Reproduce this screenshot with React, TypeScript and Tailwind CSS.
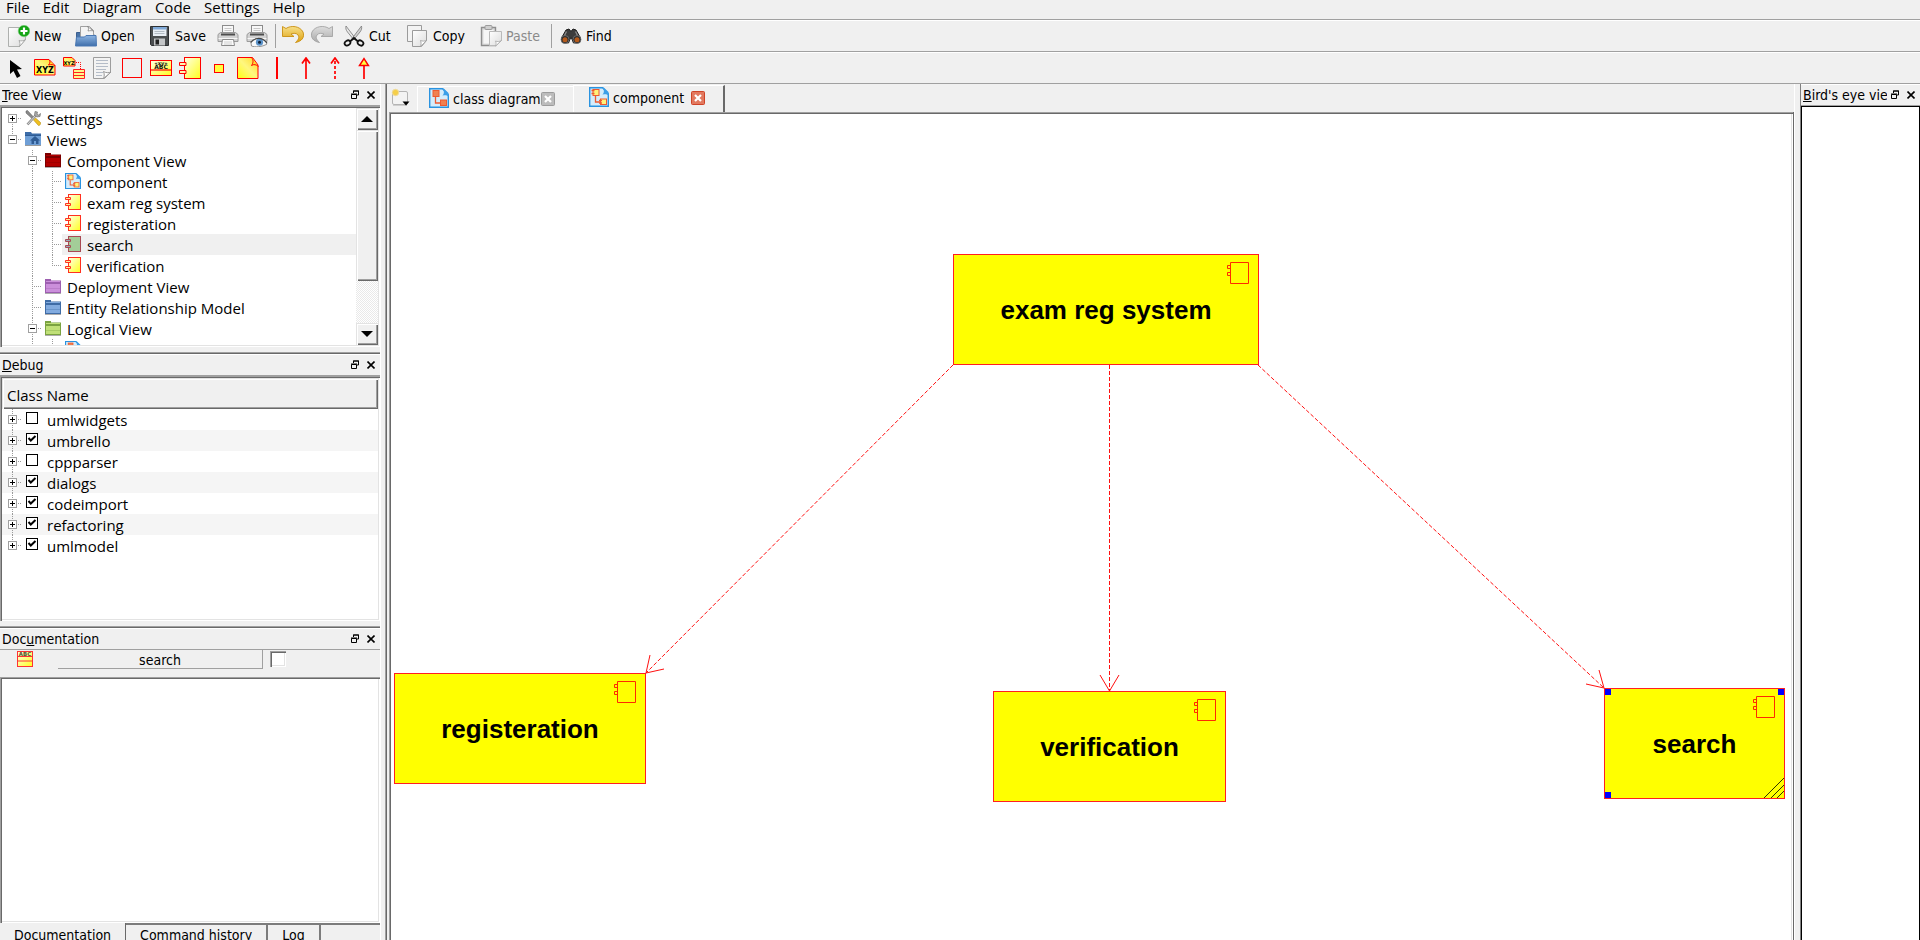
import { useState, type ReactNode } from "react";

const SUNKEN =
  "p-[2px] shadow-[inset_1px_1px_0_#a0a0a0,inset_2px_2px_0_#696969,inset_-1px_-1px_0_#ffffff,inset_-2px_-2px_0_#e3e3e3]";
const RAISED =
  "shadow-[inset_1px_1px_0_#e3e3e3,inset_2px_2px_0_#ffffff,inset_-1px_-1px_0_#696969,inset_-2px_-2px_0_#a0a0a0]";
const UI_FONT = "font-['DejaVu_Sans_Condensed','Noto_Sans',sans-serif] text-sm";

/* ---------- Icons ---------- */

function Svg({ size = 22, children }: { size?: number; children: ReactNode }) {
  return (
    <svg
      viewBox={`0 0 ${size} ${size}`}
      width={size}
      height={size}
      className="block shrink-0"
      aria-hidden="true"
    >
      {children}
    </svg>
  );
}

function Gradients() {
  return (
    <svg width="0" height="0" className="absolute" aria-hidden="true">
      <defs>
        <linearGradient id="yellow" x1="0" y1="0" x2="1" y2="1">
          <stop offset="0" stopColor="#ffffe6" />
          <stop offset="1" stopColor="#ffff1e" />
        </linearGradient>
        <linearGradient id="gold" x1="0" y1="1" x2="1" y2="0">
          <stop offset="0" stopColor="#ffff10" />
          <stop offset="0.5" stopColor="#fff780" />
          <stop offset="1" stopColor="#ffd820" />
        </linearGradient>
        <linearGradient id="paper" x1="0" y1="0" x2="1" y2="1">
          <stop offset="0" stopColor="#ffffff" />
          <stop offset="1" stopColor="#dcdcdc" />
        </linearGradient>
        <linearGradient id="blue" x1="0" y1="0" x2="0" y2="1">
          <stop offset="0" stopColor="#8db4e2" />
          <stop offset="1" stopColor="#3f6fab" />
        </linearGradient>
        <linearGradient id="undo" x1="0" y1="0" x2="0" y2="1">
          <stop offset="0" stopColor="#f7e08a" />
          <stop offset="1" stopColor="#dd9f0c" />
        </linearGradient>
        <linearGradient id="redo" x1="0" y1="0" x2="0" y2="1">
          <stop offset="0" stopColor="#dedede" />
          <stop offset="1" stopColor="#a9a9a9" />
        </linearGradient>
      </defs>
    </svg>
  );
}

const NewIcon = () => (
  <Svg>
    <path d="M.5 2.5h17v12l-6 7H.5z" fill="url(#paper)" stroke="#aeb0ae" />
    <path d="M11.5 21.5c.8-2 .5-4-.5-6 2 .8 4.500 .5 6.500-1z" fill="#fff" stroke="#9a9c9a" strokeWidth=".8" />
    <circle cx="16" cy="6" r="5.800" fill="#12a312" stroke="#7fd07f" strokeWidth=".6" />
    <path d="M16 2.500v7M12.500 6h7" stroke="#fff" strokeWidth="2.200" />
  </Svg>
);

const OpenIcon = () => (
  <Svg>
    <path d="M1.500 20V7.500h6l2 2H19V20z" fill="#4a74a8" stroke="#3b5f8f" />
    <path d="M5.500 12V1.500h9l4 4V13h-13z" fill="#f4f4f4" stroke="#a0a0a0" />
    <path d="M12.500 1.500c1.500 1.500 1 3 .5 4.500 2-.5 4-.5 5.500 0z" fill="#fff" stroke="#777" strokeWidth=".7" />
    <path d="M.5 21l1-9h8l1.500-1.500h10l.5 10.500z" fill="url(#blue)" stroke="#4a78b3" />
  </Svg>
);

const SaveIcon = () => (
  <Svg>
    <path d="M1.500 1.500h18v19h-17l-1-1z" fill="#4b4e50" stroke="#2e3032" />
    <rect x="4" y="2" width="13.500" height="9" fill="#e9eef4" />
    <path d="M4 2h13.500v2.500H4z" fill="#7fa9d8" />
    <path d="M5.500 6.500h10M5.500 8.500h10" stroke="#b4bcc4" />
    <rect x="5" y="13.500" width="11" height="7" fill="#c4c6c8" />
    <rect x="6.500" y="14.500" width="3.500" height="5" fill="#222" />
  </Svg>
);

const Printer = () => (
  <>
    <rect x="5.500" y=".5" width="11" height="8" fill="#f8f8f8" stroke="#8b8b8b" />
    <path d="M7.500 3.500h7M7.500 5.500h7" stroke="#c8c8c8" />
    <path d="M1 9.500l2.500-2h15l2.500 2v7H1z" fill="#d2d2d2" stroke="#9a9a9a" />
    <path d="M4 8.500h14v2H4z" fill="#4d4d4d" />
    <path d="M1.500 13.500h19" stroke="#f6f6f6" />
  </>
);

const PrintIcon = () => (
  <Svg>
    <Printer />
    <path d="M5.500 14.500h11l1 6h-13z" fill="#fbfbfb" stroke="#8b8b8b" />
    <path d="M7 17h8M7 19h8" stroke="#d0d0d0" />
  </Svg>
);

const PreviewIcon = () => (
  <Svg>
    <Printer />
    <path d="M5.500 21c3 1.500 11 1 15.500-2-2-4-5-5.500-8-5.500-3.500 0-6 2-8 4.500z" fill="#f6f8fa" stroke="#777" strokeWidth=".8" />
    <circle cx="13.500" cy="17.200" r="3.600" fill="#5b92c8" />
    <circle cx="13.500" cy="17.200" r="1.500" fill="#0c2038" />
    <path d="M4.500 17.500c3-4.500 11-6.500 16.500.5" fill="none" stroke="#444" strokeWidth="1.100" />
  </Svg>
);

const undoShape =
  "M.5 1.500l3.500 2c5-3.500 14-2.500 17 3.500 2 5.500-1.500 9.500-7.500 10.500 2.500-2.500 4.500-5 2.500-7.500-1.500-2-4.500-2-7-1l3 2.500H.5z";

const UndoIcon = () => (
  <Svg>
    <path d={undoShape} fill="url(#undo)" stroke="#c98f10" strokeWidth=".9" />
  </Svg>
);

const RedoIcon = () => (
  <Svg>
    <g transform="matrix(-1 0 0 1 22 0)">
      <path d={undoShape} fill="url(#redo)" stroke="#a4a4a4" strokeWidth=".9" />
    </g>
  </Svg>
);

const CutIcon = () => (
  <Svg>
    <path d="M3 1c-.5 2.500 0 4 1.500 6l6.500 8 1.500-1.500z" fill="#e8e8e8" stroke="#777" strokeWidth=".8" />
    <path d="M18.500 1c.5 2.500 0 4-1.500 6l-6.500 8L9 13.500z" fill="#d2d2d2" stroke="#777" strokeWidth=".8" />
    <ellipse cx="4.500" cy="18" rx="3" ry="2.400" fill="none" stroke="#111" strokeWidth="1.800" transform="rotate(-30 4.500 18)" />
    <ellipse cx="17.500" cy="18" rx="3" ry="2.400" fill="none" stroke="#111" strokeWidth="1.800" transform="rotate(30 17.500 18)" />
    <path d="M7 16.500l4-3.500 4 3.500" fill="none" stroke="#111" strokeWidth="1.800" />
  </Svg>
);

const CopyIcon = () => (
  <Svg>
    <path d="M.5.5h14v16H.5z" fill="#f3f3f3" stroke="#9b9b9b" />
    <path d="M5.500 5.500h14v10l-5 6h-9z" fill="url(#paper)" stroke="#9b9b9b" />
    <path d="M13.500 21.500c.8-2 .8-4 0-6 2 .8 4 .8 6 0z" fill="#fff" stroke="#9b9b9b" strokeWidth=".8" />
  </Svg>
);

const PasteIcon = () => (
  <Svg>
    <path d="M1.500 2.500h14v18h-14z" fill="#dcdcdc" stroke="#8e8e8e" strokeWidth="1.400" />
    <path d="M3.500 5h10v13.500h-10z" fill="#f6f6f6" />
    <rect x="5" y=".5" width="7" height="4" rx="1" fill="#cfcfcf" stroke="#9b9b9b" />
    <path d="M9.500 6.500h12v9l-5 5h-7z" fill="url(#paper)" stroke="#b9b9b9" />
    <path d="M15.500 21c.8-2 .8-3.500 0-5 2 .8 4 .8 6-.5z" fill="#fff" stroke="#a8a8a8" strokeWidth=".8" />
  </Svg>
);

const FindIcon = () => (
  <Svg>
    <path d="M6 5l3-1 1.500 2h1L13 4l3 1 4.500 8-1 4.500-6 .5-2-5h-1l-2 5-6-.5-1-4.500z" fill="#3c3c3c" stroke="#1c1c1c" />
    <path d="M6.500 6.500L4 11.500M15.500 6.500l2.500 5" stroke="#8c8c8c" strokeWidth="1.300" />
    <circle cx="5" cy="14.500" r="4" fill="#2b2b2b" stroke="#777" strokeWidth=".8" />
    <circle cx="17" cy="14.500" r="4" fill="#2b2b2b" stroke="#777" strokeWidth=".8" />
    <circle cx="5" cy="14.800" r="2.500" fill="#b45a1c" />
    <circle cx="17" cy="14.800" r="2.500" fill="#b45a1c" />
  </Svg>
);

const PointerIcon = () => (
  <Svg>
    <path d="M5 3v14l3.500-3 3.500 7 3.500-2-3.500-6.500 5-.5z" fill="#000" />
  </Svg>
);

const ObjectIcon = () => (
  <Svg>
    <path d="M.5 2.500h14.500l6 6v9.500H.5z" fill="url(#gold)" stroke="#f00" />
    <path d="M14.500 2.500c2 1.500 2 3 0 5.500 2.500-.8 5-.5 6.500 1" fill="#ffe030" stroke="#f00" />
    <text x="11" y="16" textAnchor="middle" fontSize="8" fontWeight="bold" fontFamily="DejaVu Sans" fill="#000">XYZ</text>
  </Svg>
);

const InstanceIcon = () => (
  <Svg>
    <path d="M.5.500h8.500l3 3v5.500H.5z" fill="url(#gold)" stroke="#f00" />
    <text x="6" y="7.500" textAnchor="middle" fontSize="5" fontWeight="bold" fontFamily="DejaVu Sans" fill="#000">XYZ</text>
    <path d="M13 5.500h4.500V12" fill="none" stroke="#f00" strokeDasharray="1 1" />
    <path d="M10.500 12.500h11v9h-11zM10.500 15.500h11M10.500 18.500h11" fill="#fff68a" stroke="#f22" />
  </Svg>
);

const NoteIcon = () => (
  <Svg>
    <path d="M1.500.5h17v15l-6 6h-11z" fill="#f3f3f3" stroke="#9d9d9d" />
    <path d="M4 3.500h12M4 6.500h12M4 9.500h12M4 12.500h10M4 15.500h7M4 18.500h6" stroke="#b4bcc8" />
    <path d="M11.500 21.500c1-2.500 1-4.500 0-7 2.500 1.500 5 1.500 7.500.5z" fill="#fff" stroke="#999" />
  </Svg>
);

const BoxIcon = () => (
  <Svg>
    <rect x="1.500" y="1.500" width="19" height="19" fill="none" stroke="#f00" />
  </Svg>
);

const InterfaceIcon = () => (
  <Svg>
    <rect x=".5" y="3.500" width="21" height="15" fill="url(#yellow)" stroke="#f00" />
    <path d="M.5 13h21" stroke="#f00" strokeWidth="1.200" />
    <text x="11" y="7.500" textAnchor="middle" fontSize="5" fontWeight="bold" fontFamily="DejaVu Sans" fill="#111">«xy»</text>
    <text x="11" y="12" textAnchor="middle" fontSize="6" fontWeight="bold" fontFamily="DejaVu Sans" fill="#111">ABC</text>
  </Svg>
);

const ComponentToolIcon = () => (
  <Svg>
    <rect x="5.500" y=".5" width="16" height="21" fill="url(#yellow)" stroke="#f00" />
    <path d="M.5 5.500h6.500v3H.5zM.5 13.500h6.500v3H.5z" fill="#fff5b0" stroke="#f00" />
  </Svg>
);

const PortIcon = () => (
  <Svg>
    <rect x="6.500" y="7.500" width="9" height="8" fill="#ffff40" stroke="#f00" />
  </Svg>
);

const ArtifactIcon = () => (
  <Svg>
    <path d="M.5.500h15l5.500 7.500v13.500H.5z" fill="url(#gold)" stroke="#f00" />
    <path d="M14.500.5c2 2.500 2 5 0 8 2-1.500 5-1 7 1" fill="#ffdf30" stroke="#f00" />
  </Svg>
);

const LineIcon = () => (
  <Svg>
    <path d="M11 0v22" stroke="#f00" strokeWidth="2" />
  </Svg>
);

const ArrowIcon = () => (
  <Svg>
    <path d="M11 1v21M7 6.500L11 1l4 5.500" fill="none" stroke="#f00" strokeWidth="1.700" />
  </Svg>
);

const DashedArrowIcon = () => (
  <Svg>
    <path d="M11 22V2" fill="none" stroke="#f00" strokeWidth="1.700" strokeDasharray="3 2" />
    <path d="M7 6.500L11 1l4 5.500" fill="none" stroke="#f00" strokeWidth="1.700" />
  </Svg>
);

const TriangleArrowIcon = () => (
  <Svg>
    <path d="M11 7v15" stroke="#f00" strokeWidth="1.700" />
    <path d="M6.500 8.500L11 1.500l4.500 7z" fill="#ffff40" stroke="#f00" strokeWidth="1.400" />
  </Svg>
);

const ToolsIcon = () => (
  <Svg size={16}>
    <path d="M1 1l1.500-.5L9 7.500 7.500 9 1 3z" fill="#8a8a8a" stroke="#555" strokeWidth=".5" />
    <path d="M8.500 10l2-2 5 4.500c.5 1.500-.5 3-2 3z" fill="#f0c020" stroke="#b08a10" strokeWidth=".6" />
    <path d="M2.500 14.500l8-9" stroke="#8c8c8c" strokeWidth="2.600" />
    <path d="M2.500 14.500l8-9" stroke="#d8d8d8" strokeWidth="1" />
    <path d="M10 1.500L9.500 5l2 2 3.500-.5.500-3-2 1.500-1.500-1L12.500 2z" fill="#a8a8a8" stroke="#666" strokeWidth=".6" />
  </Svg>
);

const HomeFolderIcon = () => (
  <Svg size={16}>
    <path d="M0 1h6l1 1.500h9V14H0z" fill="#3c6ca8" />
    <path d="M0 4h16v10H0z" fill="#6f9fd6" />
    <path d="M0 4.500h16" stroke="#2f5c94" />
    <path d="M10 5l5 4.500h-1.500V13h-7V9.500H5z" fill="#2f5c94" />
    <path d="M9 10h2v3H9z" fill="#6f9fd6" />
    <path d="M0 14.500h16" stroke="#9a9a9a" />
  </Svg>
);

function FolderIcon({ dark, light }: { dark: string; light: string }) {
  return (
    <Svg size={16}>
      <path d="M0 1h6v1.500h10V15H0z" fill={dark} />
      <path d="M1 6h14v8H1z" fill={light} />
      <path d="M1 3.500h14" stroke={light} />
      <path d="M1 10.500h14" stroke={dark} strokeOpacity=".35" />
      <path d="M0 15.500h16" stroke="#8a8a8a" strokeOpacity=".7" />
    </Svg>
  );
}

function DiagramIcon({ size, kind }: { size: 16 | 20; kind: "class" | "component" }) {
  const fill = kind === "class" ? "#f08050" : "#fff27a";
  return (
    <svg viewBox="0 0 20 20" width={size} height={size} className="block shrink-0" aria-hidden="true">
      <path d="M.7.700h13l5.600 6v12.600H.7z" fill="#d4ecfb" stroke="#2a93e0" strokeWidth="1.400" />
      <path d="M13 .7c2.500 2 2.500 4.500.5 7 2-.8 4.500-.5 6 .8V5L15 .7z" fill="#3c9fe8" />
      <rect x="4" y="2.500" width="6" height="6" fill={fill} stroke="#ee5a30" />
      <rect x="11.500" y="12" width="6" height="5.500" fill={fill} stroke="#ee5a30" />
      <path d="M6.500 9v6h5" fill="none" stroke="#ee5a30" strokeWidth="1.300" />
      {kind === "component" && (
        <path d="M2.500 3.500h3M2.500 6.500h3M10 13.500h3M10 16h3" stroke="#ee5a30" strokeWidth="1.300" />
      )}
    </svg>
  );
}

function ComponentIcon({ selected = false }: { selected?: boolean }) {
  const stroke = selected ? "#a84a54" : "#ff3020";
  return (
    <Svg size={16}>
      <rect x="3.500" y=".5" width="12" height="15" fill={selected ? "#a3cd98" : "url(#yellow)"} stroke={stroke} />
      <path d="M.5 3.500h5v2h-5zM.5 9.500h5v2h-5z" fill={selected ? "#9ab" : "#fff0a0"} stroke={stroke} />
    </Svg>
  );
}

const ClassIcon = () => (
  <Svg size={16}>
    <rect x=".5" y=".5" width="15" height="15" fill="url(#yellow)" stroke="#f33" />
    <path d="M.5 5.500h15M.5 10h15" stroke="#f33" />
    <text x="8" y="5" textAnchor="middle" fontSize="5.500" fontWeight="bold" fontFamily="DejaVu Sans" fill="#553">ABC</text>
  </Svg>
);

const NewTabIcon = () => (
  <Svg size={20}>
    <rect x="1.500" y="3.500" width="15" height="13" rx="1.500" fill="#f3f3f3" stroke="#b4b4b4" />
    <path d="M2 17.500h14" stroke="#cfcfcf" />
    <circle cx="4.500" cy="4.500" r="3.200" fill="#f5cf4a" stroke="#efdca0" />
    <path d="M11.500 13.500h7l-3.500 4z" fill="#000" />
  </Svg>
);

function CloseIcon({ active }: { active: boolean }) {
  return (
    <Svg size={14}>
      <rect x=".5" y=".5" width="13" height="13" rx="1" fill={active ? "#e2795f" : "#bcbcbc"} stroke={active ? "#cf4327" : "#9c9c9c"} />
      <path d="M4 4l6 6M10 4l-6 6" stroke="#fff" strokeWidth="2.200" />
    </Svg>
  );
}

/* ---------- Bars ---------- */

const MENUS = ["File", "Edit", "Diagram", "Code", "Settings", "Help"];

function MenuBar() {
  return (
    <nav className="flex h-5 items-start gap-[13px] border-b border-[#a0a0a0] pl-1.5">
      {MENUS.map((m) => (
        <button key={m} type="button" className="text-[15px] leading-[14px]">
          {m}
        </button>
      ))}
    </nav>
  );
}

function ToolButton({ icon, label, width, disabled, title }: {
  icon: ReactNode;
  label?: string;
  width?: string;
  disabled?: boolean;
  title?: string;
}) {
  return (
    <button
      type="button"
      aria-label={label ?? title}
      disabled={disabled}
      className={`flex shrink-0 items-center gap-1 disabled:text-[#8a8a8a] ${width ?? "w-[29px]"}`}
    >
      {icon}
      {label}
    </button>
  );
}

const Separator = () => <span className="h-6 w-px shrink-0 bg-[#a0a0a0]" />;

function MainToolbar() {
  return (
    <div className={`flex h-8 items-center border-b border-[#a0a0a0] pl-2 shadow-[inset_0_1px_0_#fff] ${UI_FONT}`}>
      <ToolButton icon={<NewIcon />} label="New" width="w-[67px]" />
      <ToolButton icon={<OpenIcon />} label="Open" width="w-[74px]" />
      <ToolButton icon={<SaveIcon />} label="Save" width="w-[68px]" />
      <ToolButton icon={<PrintIcon />} title="Print" />
      <ToolButton icon={<PreviewIcon />} title="Print preview" />
      <Separator />
      <div className="flex pl-1.5">
        <ToolButton icon={<UndoIcon />} title="Undo" />
        <ToolButton icon={<RedoIcon />} title="Redo" width="w-[32px]" />
        <ToolButton icon={<CutIcon />} label="Cut" width="w-[64px]" />
        <ToolButton icon={<CopyIcon />} label="Copy" width="w-[73px]" />
        <ToolButton icon={<PasteIcon />} label="Paste" width="w-[71px]" disabled />
      </div>
      <Separator />
      <div className="pl-2">
        <ToolButton icon={<FindIcon />} label="Find" width="w-[64px]" />
      </div>
    </div>
  );
}

const TOOLS: [string, () => ReactNode][] = [
  ["Select", PointerIcon],
  ["Object", ObjectIcon],
  ["Instance", InstanceIcon],
  ["Note", NoteIcon],
  ["Box", BoxIcon],
  ["Interface", InterfaceIcon],
  ["Component", ComponentToolIcon],
  ["Port", PortIcon],
  ["Artifact", ArtifactIcon],
  ["Anchor", LineIcon],
  ["Association", ArrowIcon],
  ["Dependency", DashedArrowIcon],
  ["Generalization", TriangleArrowIcon],
];

function DiagramToolbar() {
  return (
    <div className="flex h-8 items-center border-b border-[#a0a0a0] pl-[5px] shadow-[inset_0_1px_0_#fff]">
      {TOOLS.map(([title, Icon]) => (
        <ToolButton key={title} icon={<Icon />} title={title} />
      ))}
    </div>
  );
}

/* ---------- Dock panels ---------- */

function DockHeader({ children }: { children: ReactNode }) {
  return (
    <header className={`flex h-[22px] shrink-0 items-center border-b border-[#a0a0a0] pl-0.5 shadow-[inset_0_1px_0_#fff] ${UI_FONT}`}>
      <h2 className="mr-1 min-w-0 flex-1 overflow-hidden whitespace-nowrap leading-5">{children}</h2>
      <button type="button" aria-label="Float" className="mr-2">
        <svg width="8" height="9" viewBox="0 0 8 9" className="block" aria-hidden="true">
          <path d="M2.500 3V1h5v4H6M2 1h6M.5 4.500h5v4h-5zM0 4h6" fill="none" stroke="#000" />
        </svg>
      </button>
      <button type="button" aria-label="Close" className="mr-[5px]">
        <svg width="8" height="8" viewBox="0 0 8 8" className="block" aria-hidden="true">
          <path d="M.5.500l7 7M7.500.500l-7 7" stroke="#000" strokeWidth="1.600" />
        </svg>
      </button>
    </header>
  );
}

type Cell = "blank" | "line" | "tee" | "end" | "plusFirst" | "plus" | "plusLast" | "minus" | "minusLast";

function Branch({ kind }: { kind: Cell }) {
  const box = kind.startsWith("plus") || kind.startsWith("minus");
  const up = kind !== "blank" && kind !== "plusFirst";
  const down = kind === "line" || kind === "tee" || kind === "plus" || kind === "plusFirst" || kind === "minus";
  const side = kind !== "blank" && kind !== "line";
  return (
    <svg width="20" height="21" viewBox="0 0 20 21" className="block shrink-0" aria-hidden="true">
      <g stroke="#9a9a9a" strokeDasharray="1 1">
        {up && <path d="M10.500 0v10" />}
        {down && <path d="M10.500 10v11" />}
        {side && <path d="M10 10.500h10" />}
      </g>
      {box && <rect x="6.500" y="6.500" width="8" height="8" fill="#fff" stroke="#a0a0a0" />}
      {box && <path d="M8 10.500h5" stroke="#000" />}
      {kind.startsWith("plus") && <path d="M10.500 8v5" stroke="#000" />}
    </svg>
  );
}

type TreeRow = { cells: Cell[]; icon: ReactNode; label: string; selected?: boolean };

const TREE: TreeRow[] = [
  { cells: ["plusFirst"], icon: <ToolsIcon />, label: "Settings" },
  { cells: ["minusLast"], icon: <HomeFolderIcon />, label: "Views" },
  { cells: ["blank", "minus"], icon: <FolderIcon dark="#7c0000" light="#b30000" />, label: "Component View" },
  { cells: ["blank", "line", "tee"], icon: <DiagramIcon size={16} kind="component" />, label: "component" },
  { cells: ["blank", "line", "tee"], icon: <ComponentIcon />, label: "exam reg system" },
  { cells: ["blank", "line", "tee"], icon: <ComponentIcon />, label: "registeration" },
  { cells: ["blank", "line", "tee"], icon: <ComponentIcon selected />, label: "search", selected: true },
  { cells: ["blank", "line", "end"], icon: <ComponentIcon />, label: "verification" },
  { cells: ["blank", "tee"], icon: <FolderIcon dark="#9d5fb0" light="#cb8fdb" />, label: "Deployment View" },
  { cells: ["blank", "tee"], icon: <FolderIcon dark="#3f6ca6" light="#82abdf" />, label: "Entity Relationship Model" },
  { cells: ["blank", "minus"], icon: <FolderIcon dark="#7ba341" light="#c0e078" />, label: "Logical View" },
  { cells: ["blank", "line", "tee"], icon: <DiagramIcon size={16} kind="class" />, label: "class diagram" },
];

function ScrollBar() {
  return (
    <div className="flex w-[22px] shrink-0 flex-col bg-[repeating-conic-gradient(#fff_0_25%,#e9e9e9_0_50%)] bg-[length:2px_2px]">
      <button type="button" aria-label="Scroll up" className={`flex h-[22px] items-center justify-center bg-[#f0f0f0] ${RAISED}`}>
        <svg width="12" height="6" viewBox="0 0 12 6" aria-hidden="true"><path d="M0 6l6-6 6 6z" /></svg>
      </button>
      <div className={`h-[151px] bg-[#f0f0f0] ${RAISED}`} />
      <button type="button" aria-label="Scroll down" className={`mt-auto flex h-[22px] items-center justify-center bg-[#f0f0f0] ${RAISED}`}>
        <svg width="12" height="6" viewBox="0 0 12 6" aria-hidden="true"><path d="M0 0l6 6 6-6z" /></svg>
      </button>
    </div>
  );
}

function TreePanel() {
  return (
    <section>
      <DockHeader><u>T</u>ree View</DockHeader>
      <div className={`flex h-[241px] bg-white ${SUNKEN}`}>
        <ul role="tree" aria-label="Tree View" className="min-w-0 flex-1 overflow-hidden text-[15px]">
          {TREE.map((row) => (
            <li key={row.label} role="treeitem" aria-selected={!!row.selected} className="flex h-[21px]">
              {row.cells.map((c, i) => <Branch key={i} kind={c} />)}
              <span className={`flex flex-1 items-start gap-1.5 whitespace-nowrap pl-[3px] ${row.selected ? "bg-[#f0f0f0]" : ""}`}>
                <span className="pt-0.5">{row.icon}</span>
                <span className="leading-[22px]">{row.label}</span>
              </span>
            </li>
          ))}
        </ul>
        <ScrollBar />
      </div>
    </section>
  );
}

const DEBUG_ROWS: [string, boolean][] = [
  ["umlwidgets", false],
  ["umbrello", true],
  ["cppparser", false],
  ["dialogs", true],
  ["codeimport", true],
  ["refactoring", true],
  ["umlmodel", true],
];

function DebugPanel() {
  return (
    <section>
      <DockHeader><u>D</u>ebug</DockHeader>
      <div className={`h-[245px] bg-white ${SUNKEN}`}>
        <table className="w-full border-collapse text-[15px]">
          <thead>
            <tr>
              <th className={`h-[31px] bg-[#f0f0f0] pl-[5px] pt-0.5 text-left font-normal leading-6 ${RAISED}`}>Class Name</th>
            </tr>
          </thead>
          <tbody>
            {DEBUG_ROWS.map(([name, on], i) => (
              <tr key={name} className="even:bg-[#f5f5f5]">
                <td className="h-[21px] p-0">
                  <div className="flex h-[21px]">
                    <Branch kind={i === DEBUG_ROWS.length - 1 ? "plusLast" : "plus"} />
                    <label className="flex items-start pl-1">
                      <span className="mt-[3px] grid">
                        <input type="checkbox" defaultChecked={on} className="peer col-start-1 row-start-1 size-3 appearance-none border border-black bg-white" />
                        <svg width="12" height="12" viewBox="0 0 12 12" className="pointer-events-none col-start-1 row-start-1 hidden peer-checked:block" aria-hidden="true">
                          <path d="M2.500 5l2.300 2.500L9.500 3" fill="none" stroke="#000" strokeWidth="2" />
                        </svg>
                      </span>
                      <span className="pl-[9px] leading-[22px]">{name}</span>
                    </label>
                  </div>
                </td>
              </tr>
            ))}
          </tbody>
        </table>
      </div>
    </section>
  );
}

const Divider = ({ className }: { className: string }) => (
  <div className={`shrink-0 border-b border-[#696969] shadow-[inset_0_-1px_0_#a0a0a0] ${className}`} />
);

const BOTTOM_TABS = ["Documentation", "Command history", "Log"];

function DocumentationPanel() {
  const [tab, setTab] = useState("Documentation");
  return (
    <section className="flex min-h-0 flex-1 flex-col">
      <DockHeader>Doc<u>u</u>mentation</DockHeader>
      <div className={`flex h-[27px] shrink-0 items-start pl-[17px] ${UI_FONT}`}>
        <span className="pt-px"><ClassIcon /></span>
        <button type="button" className="ml-[25px] h-[19px] w-[205px] border-b border-r border-[#a0a0a0] leading-5">
          search
        </button>
        <input
          type="checkbox"
          aria-label="Documented"
          className="ml-[7px] mt-px size-4 appearance-none bg-white shadow-[inset_1px_1px_0_#a0a0a0,inset_2px_2px_0_#696969,inset_-1px_-1px_0_#fff,inset_-2px_-2px_0_#e3e3e3]"
        />
      </div>
      <textarea aria-label="Documentation text" className={`min-h-0 w-full flex-1 resize-none bg-white outline-none ${SUNKEN}`} />
      <div role="tablist" className={`flex h-[17px] shrink-0 items-start ${UI_FONT}`}>
        {BOTTOM_TABS.map((t) => (
          <button
            key={t}
            type="button"
            role="tab"
            aria-selected={t === tab}
            onClick={() => setTab(t)}
            className={
              t === tab
                ? "h-7 border-r border-[#696969] px-[14px] pb-1 leading-5"
                : "h-7 border-r-2 border-t-2 border-[#7c7c7c] px-[14px] pb-2 leading-5"
            }
          >
            {t}
          </button>
        ))}
        <div className="flex-1 border-t-2 border-[#7c7c7c]" />
      </div>
    </section>
  );
}

/* ---------- Diagram ---------- */

function NodeBox({ label, place, selected }: { label: string; place: string; selected?: boolean }) {
  return (
    <div className={`absolute flex h-[111px] items-center justify-center border border-[#ff2020] bg-[#ffff00] ${place}`}>
      <span className="font-['Liberation_Sans',Arial,sans-serif] text-[26px] font-bold leading-8">{label}</span>
      <svg width="24" height="24" viewBox="0 0 24 24" className="absolute right-2 top-[7px]" aria-hidden="true">
        <path d="M4.500.5h18v21h-18zM1.500 3.500h3v3h-3zM1.500 10.500h3v3h-3z" fill="none" stroke="#ff2a00" />
      </svg>
      {selected && (
        <>
          <span className="absolute left-0 top-0 size-1.5 bg-[#0000ff]" />
          <span className="absolute right-0 top-0 size-1.5 bg-[#0000ff]" />
          <span className="absolute bottom-0 left-0 size-1.5 bg-[#0000ff]" />
          <svg width="20" height="20" viewBox="0 0 20 20" className="absolute bottom-0 right-0" aria-hidden="true">
            <path d="M0 20L20 0M7 20L20 7M13 20l7-7" stroke="#333300" />
          </svg>
        </>
      )}
    </div>
  );
}

function Canvas() {
  return (
    <div className="relative min-h-0 flex-1 overflow-hidden bg-white p-[2px] pb-0 shadow-[inset_1px_1px_0_#a0a0a0,inset_2px_2px_0_#696969,inset_-1px_0_0_#ffffff,inset_-2px_0_0_#e3e3e3]">
      <svg width="1400" height="826" viewBox="391 114 1400 826" className="block" aria-label="Dependencies">
        <g fill="none" stroke="#ff1010">
          <g strokeDasharray="4 2">
            <path d="M953 365L646 673" />
            <path d="M1109.500 365V691" />
            <path d="M1258 365L1604 688" />
          </g>
          <path d="M650 655l-4 18 18-4M1100 675l9.500 16 9.500-16M1599 670l5 18-18-4" />
        </g>
      </svg>
      <NodeBox label="exam reg system" place="left-[564px] top-[142px] w-[306px]" />
      <NodeBox label="registeration" place="left-[5px] top-[561px] w-[252px]" />
      <NodeBox label="verification" place="left-[604px] top-[579px] w-[233px]" />
      <NodeBox label="search" place="left-[1215px] top-[576px] w-[181px]" selected />
    </div>
  );
}

function DiagramTab({ label, kind, active, onSelect }: {
  label: string;
  kind: "class" | "component";
  active: boolean;
  onSelect: () => void;
}) {
  return (
    <div className={`flex items-start border-l border-t border-white pr-[18px] ${active ? "mt-px border-r-2 border-r-[#696969] pl-[15px] pt-px" : "mt-0.5 pl-[11px] pt-px"}`}>
      <button type="button" role="tab" aria-selected={active} onClick={onSelect} className="flex items-start gap-1">
        <DiagramIcon size={20} kind={kind} />
        <span className={kind === "class" ? "w-[88px] text-left leading-[22px]" : "w-[78px] text-left leading-[22px]"}>{label}</span>
      </button>
      <button type="button" aria-label={`Close ${label}`} className="mt-1">
        <CloseIcon active={active} />
      </button>
    </div>
  );
}

function Workspace() {
  const [active, setActive] = useState("component");
  return (
    <main className="flex min-w-0 flex-1 flex-col border-l border-[#a0a0a0] shadow-[inset_1px_0_0_#696969]">
      <div role="tablist" className={`flex h-7 shrink-0 pl-[5px] ${UI_FONT}`}>
        <button type="button" aria-label="New diagram" className="mr-1.5 self-start pt-1">
          <NewTabIcon />
        </button>
        <DiagramTab label="class diagram" kind="class" active={active === "class diagram"} onSelect={() => setActive("class diagram")} />
        <DiagramTab label="component" kind="component" active={active === "component"} onSelect={() => setActive("component")} />
      </div>
      <div className="flex min-h-0 flex-1 border-r border-[#696969] pl-[3px]">
        <Canvas />
      </div>
    </main>
  );
}

export default function App() {
  return (
    <div className="flex h-screen flex-col overflow-hidden bg-[#f0f0f0] font-['Open_Sans','Noto_Sans',sans-serif] text-black">
      <Gradients />
      <MenuBar />
      <MainToolbar />
      <DiagramToolbar />
      <div className="flex min-h-0 flex-1">
        <aside className="flex w-[380px] shrink-0 flex-col">
          <TreePanel />
          <Divider className="h-[7px]" />
          <DebugPanel />
          <Divider className="h-[7px]" />
          <DocumentationPanel />
        </aside>
        <div className="w-[5px] shrink-0 border-l border-white" />
        <Workspace />
        <div className="w-1.5 shrink-0 border-l border-white" />
        <aside className="flex w-[120px] shrink-0 flex-col border-l border-[#808080]">
          <DockHeader><u>B</u>ird's eye view</DockHeader>
          <div className="flex-1 border border-b-0 border-black bg-white" />
        </aside>
      </div>
    </div>
  );
}
